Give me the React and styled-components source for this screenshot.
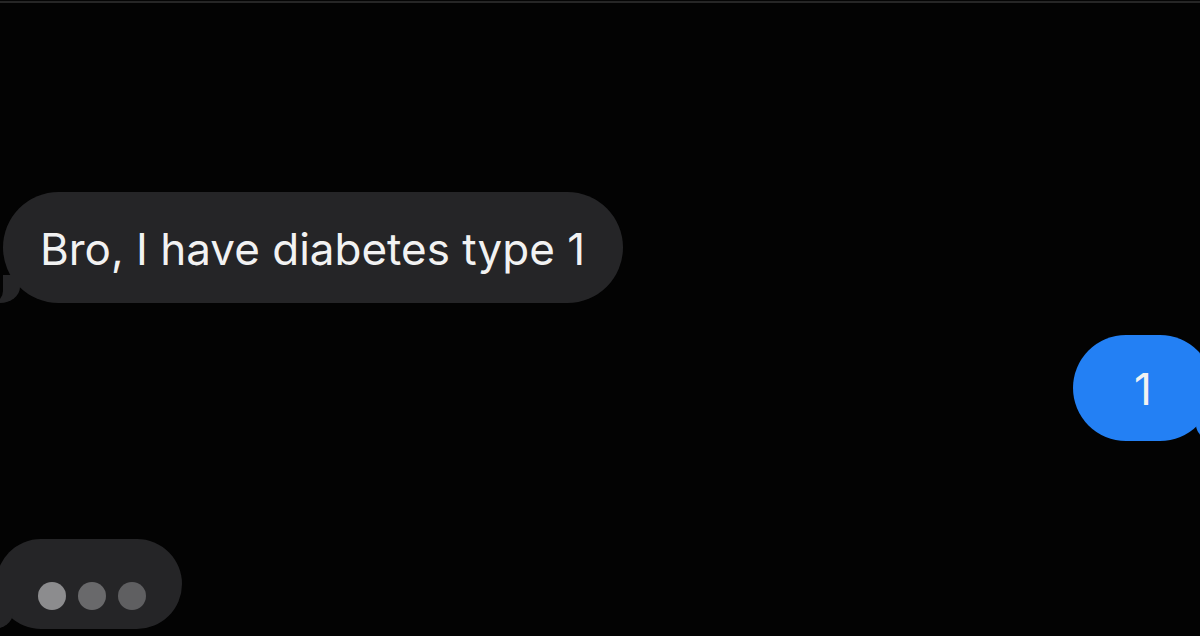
import styled, { createGlobalStyle } from 'styled-components';

const Global = createGlobalStyle`
  html, body {
    margin: 0;
    padding: 0;
    background: #030303;
    overflow: hidden;
  }
`;

const Screen = styled.main`
  width: 1200px;
  height: 636px;
  display: flex;
  flex-direction: column;
  border-top: 1px solid #050505;
  box-shadow: inset 0 2px 0 #262626;
  overflow: hidden;
  font-family: Inter, "Noto Sans", "Liberation Sans", sans-serif;
`;

const Row = styled.div`
  display: flex;
  justify-content: ${({ $mine }) => ($mine ? 'flex-end' : 'flex-start')};
  margin-top: ${({ $top }) => $top}px;
`;

// tail = coloured blob (::before) cut by a page-coloured blob (::after)
const Bubble = styled.div`
  position: relative;
  display: flex;
  align-items: center;
  height: ${({ $h }) => $h}px;
  border-radius: ${({ $h }) => $h / 2}px;
  background: ${({ $mine }) => ($mine ? '#2380f4' : '#252527')};
  color: #f2f2f2;
  font-size: 44px;
  white-space: nowrap;
  box-sizing: border-box;

  &::before,
  &::after {
    content: '';
    position: absolute;
    bottom: 0;
    height: 28px;
  }

  &::before {
    width: 26px;
    background: inherit;
    ${({ $mine }) =>
      $mine
        ? 'right: -9px; border-bottom-left-radius: 20px 16px;'
        : 'left: -9px; border-bottom-right-radius: 20px 16px;'}
  }

  &::after {
    width: 24px;
    background: #030303;
    ${({ $mine }) =>
      $mine
        ? 'right: -24px; border-bottom-left-radius: 12px;'
        : 'left: -24px; border-bottom-right-radius: 12px;'}
  }
`;

const Received = styled(Bubble)`
  margin-left: 3px;
  padding: 2px 38px 0 37px;
`;

const Sent = styled(Bubble)`
  width: 140px;
  justify-content: center;
  margin-right: -13px;
  padding-top: 2px;
`;

const Typing = styled(Bubble)`
  width: 186px;
  margin-left: -4px;
  padding: 24px 0 0 42px;
  gap: 12px;
`;

const Dot = styled.span`
  width: 28px;
  height: 28px;
  border-radius: 50%;
  background: ${({ $c }) => $c};
`;

const App = () => (
  <>
    <Global />
    <Screen>
      <Row $top={191}>
        <Received $h={111}>Bro, I have diabetes type 1</Received>
      </Row>
      <Row $mine $top={32}>
        <Sent $mine $h={106}>1</Sent>
      </Row>
      <Row $top={98}>
        <Typing $h={90}>
          <Dot $c="#8c8c8e" />
          <Dot $c="#69696b" />
          <Dot $c="#5f5f61" />
        </Typing>
      </Row>
    </Screen>
  </>
);

export default App;
